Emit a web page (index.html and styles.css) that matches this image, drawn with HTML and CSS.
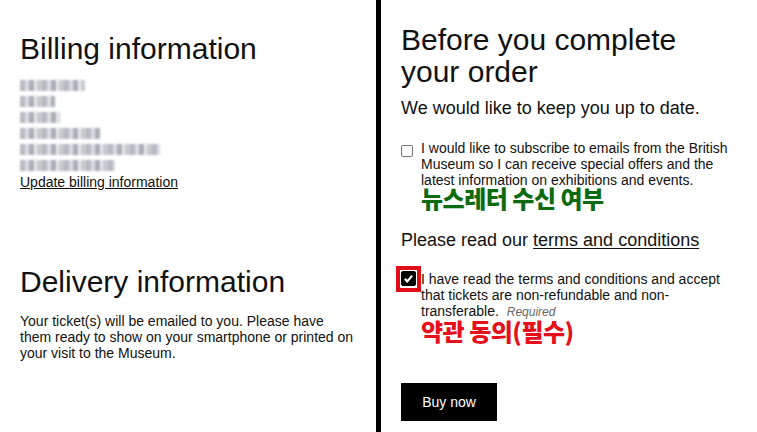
FILE: index.html
```html
<!DOCTYPE html>
<html lang="en">
<head>
<meta charset="utf-8">
<title>Checkout</title>
<link rel="stylesheet" href="styles.css">
</head>
<body>
<div class="page">
  <section class="col left">
    <h2 class="h-title">Billing information</h2>
    <div class="address">
      <div class="blur w65"></div>
      <div class="blur w35"></div>
      <div class="blur w40"></div>
      <div class="blur w80"></div>
      <div class="blur w140"></div>
      <div class="blur w95"></div>
    </div>
    <a class="link" href="#">Update billing information</a>
    <h2 class="h-title delivery">Delivery information</h2>
    <p class="para">Your ticket(s) will be emailed to you. Please have them ready to show on your smartphone or printed on your visit to the Museum.</p>
  </section>
  <div class="divider"></div>
  <section class="col right">
    <h2 class="h-title wide">Before you complete your order</h2>
    <p class="lead">We would like to keep you up to date.</p>
    <div class="check-row first">
      <span class="box-slot"><span class="box"></span></span>
      <p class="check-text">I would like to subscribe to emails from the British Museum so I can receive special offers and the latest information on exhibitions and events.</p>
    </div>
    <div class="note green">뉴스레터 수신 여부</div>
    <p class="lead terms">Please read our <a class="tlink" href="#">terms and conditions</a></p>
    <div class="check-row second">
      <span class="box-slot marked">
        <span class="box checked">
          <svg width="11" height="11" viewBox="0 0 11 11"><path d="M1.8 5.9 L4.3 8.4 L9.2 2.6" fill="none" stroke="#fff" stroke-width="2.2"/></svg>
        </span>
      </span>
      <p class="check-text">I have read the terms and conditions and accept that tickets are non-refundable and non-transferable. <em class="req">Required</em></p>
    </div>
    <div class="note red">약관 동의(필수)</div>
    <button class="buy">Buy now</button>
  </section>
</div>
</body>
</html>
```
FILE: styles.css
```css
*, *::before, *::after { box-sizing: border-box; }
html, body { margin: 0; padding: 0; background: #fff; }
body {
  font-family: "Liberation Sans", Arial, sans-serif;
  color: #111;
  width: 757px;
  height: 432px;
  overflow: hidden;
}
.page {
  display: flex;
  height: 432px;
}
.col { display: flex; flex-direction: column; align-items: flex-start; }
.left { width: 376px; padding: 32px 0 0 20px; }
.divider { width: 5px; background: #000; height: 432px; flex: none; }
.right { flex: 1; padding: 24px 0 0 20px; }

.h-title {
  margin: 0;
  font-size: 30px;
  line-height: 34px;
  font-weight: 400;
  color: #111;
}
.h-title.wide { width: 320px; line-height: 32px; }
.address { margin-top: 12px; display: flex; flex-direction: column; }
.blur {
  height: 16px;
  position: relative;
}
.blur::before {
  content: "";
  position: absolute;
  left: 0; right: 0; top: 2px; height: 11px;
  background:
    repeating-linear-gradient(90deg, rgba(150,155,165,.7) 0 5px, rgba(195,198,205,.6) 5px 9px, rgba(125,130,140,.65) 9px 14px, rgba(210,212,216,.55) 14px 17px, rgba(160,165,172,.6) 17px 22px);
  filter: blur(1px);
}
.w65 { width: 65px; } .w35 { width: 35px; } .w40 { width: 40px; }
.w80 { width: 80px; } .w140 { width: 140px; } .w95 { width: 95px; }

.link {
  font-size: 14px;
  line-height: 16px;
  color: #111;
  text-decoration: underline;
}
.delivery { margin-top: 75px; }
.para {
  margin: 14px 0 0;
  font-size: 14px;
  line-height: 16px;
  width: 336px;
}

.lead {
  margin: 10px 0 0;
  font-size: 18px;
  line-height: 20px;
}
.terms { margin-top: 19px; }
.tlink { color: #111; text-decoration: underline; text-underline-offset: 2px; }

.check-row { display: flex; align-items: flex-start; gap: 5px; }
.check-row.first { margin-top: 22px; }
.check-row.second { margin-top: 21px; }
.box-slot { flex: none; width: 15px; display: flex; position: relative; }
.box {
  flex: none;
  width: 12px; height: 12px;
  border: 1px solid #767676;
  border-radius: 2px;
  margin-top: 5px;
  display: flex; align-items: center; justify-content: center;
  background: #fff;
}
.box.checked { background: #000; border-color: #000; width: 15px; height: 15px; margin-top: 0; border-radius: 2px; }
.marked::after {
  content: "";
  position: absolute;
  left: -5px; top: -5px;
  width: 25px; height: 26px;
  border: 4px solid #e20e17;
}
.check-text {
  margin: 0;
  font-size: 14px;
  line-height: 16px;
  width: 320px;
}
.req { font-size: 12px; color: #666; margin-left: 4px; }

.note {
  margin-left: 20px;
  font-family: "Noto Sans CJK KR", sans-serif;
  font-weight: 900;
  font-size: 24px;
  line-height: 26px;
  letter-spacing: -0.5px;
}
.green { color: #0c6a10; margin-top: -3px; }
.red { color: #e5101b; margin-top: -2px; }

.buy {
  margin-top: 39px;
  width: 96px;
  height: 38px;
  background: #000;
  color: #fff;
  border: none;
  border-radius: 0;
  font-family: "Liberation Sans", Arial, sans-serif;
  font-size: 14px;
  padding: 0;
}
```
